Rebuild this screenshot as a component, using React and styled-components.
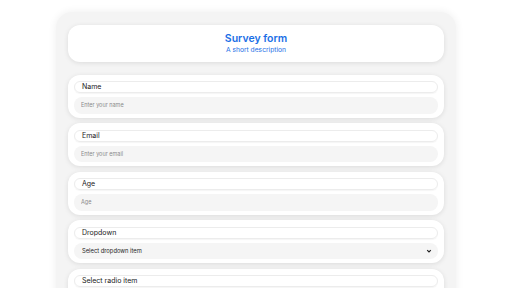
import React from "react";
import styled, { createGlobalStyle } from "styled-components";

const Global = createGlobalStyle`
  html, body { margin: 0; padding: 0; background: #ffffff; }
  body { font-family: "Inter", "Noto Sans", sans-serif; }
  * { box-sizing: border-box; }
`;

const Container = styled.div`
  width: 400px;
  margin: 12px auto 0;
  padding: 13px 12px 12px;
  background: #f4f4f4;
  border-radius: 16px;
  box-shadow: 0 0 8px rgba(0, 0, 0, 0.07);
  display: flex;
  flex-direction: column;
  gap: 5.5px;
`;

const Header = styled.div`
  height: 37px;
  background: #fff;
  border-radius: 12px;
  box-shadow: 0 1px 5px rgba(0, 0, 0, 0.1);
  display: flex;
  flex-direction: column;
  align-items: center;
  justify-content: center;
  margin-bottom: 7px;
  color: #1a6ee6;
`;

const Title = styled.div`
  font-size: 10.5px;
  font-weight: 600;
  line-height: 13px;
`;

const Subtitle = styled.div`
  font-size: 6.7px;
  line-height: 10px;
`;

const Card = styled.div`
  height: 43px;
  background: #fff;
  border-radius: 12px;
  box-shadow: 0 1px 5px rgba(0, 0, 0, 0.1);
  padding: 6.5px 6px 4px;
  display: flex;
  flex-direction: column;
  gap: 4px;
`;

const Label = styled.div`
  height: 12px;
  border: 1px solid #ececec;
  border-radius: 8px;
  padding: 0 7px;
  font-size: 7px;
  line-height: 10px;
  font-weight: 400;
  color: #1a1a1a;
  box-shadow: 0 1px 1px rgba(0, 0, 0, 0.04);
`;

const Input = styled.input`
  height: 17px;
  border: none;
  outline: none;
  background: #f5f5f5;
  border-radius: 8px;
  padding: 0 7px;
  font-family: inherit;
  font-size: 5.5px;
  color: #333;
  &::placeholder { color: #8a8a8a; }
`;

const SelectBox = styled.div`
  height: 17px;
  background: #f5f5f5;
  border-radius: 8px;
  padding: 0 6px 0 8px;
  display: flex;
  align-items: center;
  justify-content: space-between;
  font-size: 5.8px;
  color: #1e1e1e;
`;

const Chevron = () => (
  <svg width="6" height="6" viewBox="0 0 10 10">
    <path d="M2 3.5 L5 6.5 L8 3.5" fill="none" stroke="#222" strokeWidth="2" />
  </svg>
);

const fields = [
  { label: "Name", placeholder: "Enter your name" },
  { label: "Email", placeholder: "Enter your email" },
  { label: "Age", placeholder: "Age" },
];

export default function App() {
  return (
    <>
      <Global />
      <Container>
        <Header>
          <Title>Survey form</Title>
          <Subtitle>A short description</Subtitle>
        </Header>
        {fields.map((f) => (
          <Card key={f.label}>
            <Label>{f.label}</Label>
            <Input placeholder={f.placeholder} />
          </Card>
        ))}
        <Card>
          <Label>Dropdown</Label>
          <SelectBox>
            <span>Select dropdown item</span>
            <Chevron />
          </SelectBox>
        </Card>
        <Card>
          <Label>Select radio item</Label>
        </Card>
      </Container>
    </>
  );
}
